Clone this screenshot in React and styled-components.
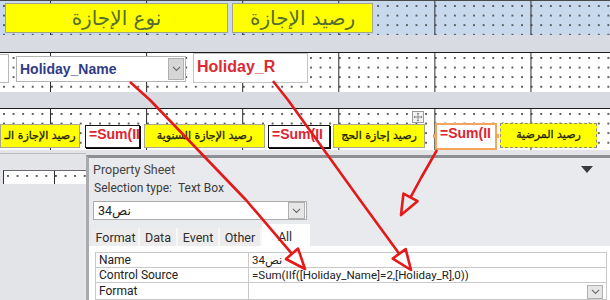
import React from "react";
import styled, { createGlobalStyle, css } from "styled-components";

const GlobalStyle = createGlobalStyle`
  html, body {
    margin: 0;
    padding: 0;
    background: #e3e4e8;
  }
  body {
    font-family: Roboto, "DejaVu Sans", sans-serif;
  }
`;

// design grid: dark column rules every 96px plus a dot pattern
const designGrid = (bg) => css`
  background-color: ${bg};
  background-image: linear-gradient(90deg, #2a2a2a 1px, transparent 1px),
    radial-gradient(circle at 1px 1px, #5c5c5c 0.8px, transparent 1.2px);
  background-size: 96.1px 100%, 9.6px 9.6px;
  background-position: 50px 0, 3px 4px;
`;

const Page = styled.div`
  position: relative;
  width: 610px;
  height: 300px;
  overflow: hidden;
  display: flex;
  flex-direction: column;
  background: #e3e4e8;
`;

const Section = styled.div`
  ${(p) => designGrid(p.$bg || "#ffffff")}
  flex: none;
  height: ${(p) => p.$h}px;
  box-sizing: border-box;
  border-top: 1px solid ${(p) => p.$line || "#1c1c1c"};
  display: flex;
  align-items: flex-start;
  padding: ${(p) => p.$pad || "0"};
`;

const Band = styled.div`
  flex: none;
  height: ${(p) => p.$h}px;
  background: #d9dbe2;
`;

const HeaderLabel = styled.div`
  flex: none;
  width: ${(p) => p.$w}px;
  height: 30px;
  margin-left: ${(p) => p.$ml || 0}px;
  box-sizing: border-box;
  background: #ffff00;
  border: 1px solid #a4a488;
  direction: rtl;
  display: flex;
  align-items: center;
  justify-content: center;
  white-space: nowrap;
  overflow: hidden;
  font-family: "DejaVu Sans", sans-serif;
  font-size: 20px;
  color: #536d33;
`;

const StubBox = styled.div`
  flex: none;
  width: 9px;
  height: 29px;
  margin-top: 1px;
  box-sizing: border-box;
  background: #fff;
  border: 1px solid #b8b8b8;
  border-left: none;
`;

const Combo = styled.div`
  flex: none;
  width: 170px;
  height: 26px;
  margin: 3px 0 0 7px;
  box-sizing: border-box;
  background: #fff;
  border: 1px solid #b3b3b3;
  display: flex;
  align-items: center;
  justify-content: space-between;
  padding: 0 1px 0 3px;
  font: bold 14px "Liberation Sans", Arial, sans-serif;
  color: #2f3b87;
`;

const DropBtn = styled.div`
  flex: none;
  width: ${(p) => p.$w || 16}px;
  height: ${(p) => p.$h || 22}px;
  box-sizing: border-box;
  background: ${(p) => p.$bg || "#d6d6d6"};
  border: 1px solid #b0b0b0;
  display: flex;
  align-items: center;
  justify-content: center;
`;

const RefBox = styled.div`
  flex: none;
  width: 115px;
  height: 30px;
  margin-left: 7px;
  box-sizing: border-box;
  background: #fff;
  border: 1px solid #c4c4c4;
  padding: 4px 0 0 3px;
  font: bold 16px "Liberation Sans", Arial, sans-serif;
  color: #dc2a35;
`;

const FieldLabel = styled.div`
  position: relative;
  flex: none;
  width: ${(p) => p.$w}px;
  height: ${(p) => p.$h || 24}px;
  margin-left: ${(p) => p.$ml || 0}px;
  margin-top: ${(p) => p.$mt || 0}px;
  box-sizing: border-box;
  background: #ffff00;
  border: 1px ${(p) => (p.$dashed ? "dashed #8a8a8a" : "solid #a8a890")};
  direction: rtl;
  text-align: center;
  white-space: nowrap;
  padding: 0 1px;
  line-height: 21px;
  font-family: "DejaVu Sans", sans-serif;
  font-size: 11px;
  color: #1e1e10;
  -webkit-text-stroke: 0.3px #1e1e10;
`;

const LabelText = styled.div`
  overflow: hidden;
`;

const SumBox = styled.div`
  position: relative;
  flex: none;
  width: ${(p) => p.$w}px;
  height: ${(p) => p.$h || 23}px;
  margin-left: ${(p) => p.$ml || 0}px;
  margin-top: ${(p) => p.$mt || 1}px;
  box-sizing: border-box;
  background: #fff;
  border: ${(p) => (p.$selected ? "2px solid #f5a45c" : "1px solid #161616")};
  box-shadow: ${(p) => (p.$selected ? "none" : "1px 1px 0 #000")};
  white-space: nowrap;
  padding-left: 3px;
  line-height: 21px;
  font: bold 14px "Liberation Sans", Arial, sans-serif;
  color: #df2530;
  ${(p) =>
    p.$selected &&
    css`
      &::before,
      &::after {
        content: "";
        position: absolute;
        top: 9px;
        width: 4px;
        height: 4px;
        background: #f5a45c;
      }
      &::before {
        left: -4px;
      }
      &::after {
        right: -4px;
      }
    `}
`;

const SumText = styled.div`
  overflow: hidden;
  width: 100%;
`;

const MoveHandle = styled.svg`
  position: absolute;
  right: 0;
  top: -14px;
`;

const Footer = styled.div`
  flex: 1;
  display: flex;
  min-height: 0;
`;

const FormStub = styled.div`
  flex: none;
  width: 86px;
  padding-top: 3px;
`;

const StubRule = styled.div`
  height: 1px;
  background: #b9bbc1;
`;

const StubStrip = styled.div`
  ${designGrid("#ffffff")}
  height: 13px;
  margin: 16px 0 0 3px;
  border-left: 1px solid #333;
  border-top: 1px solid #6a6a6a;
`;

const Panel = styled.div`
  flex: 1;
  margin-top: 5px;
  display: flex;
  flex-direction: column;
  background: #e9eaee;
  border-top: 3px solid #8e8f93;
  border-left: 3px solid #a9aaae;
  color: #333;
  font-family: Roboto, "DejaVu Sans", sans-serif;
`;

const PanelHeader = styled.div`
  height: 24px;
  display: flex;
  align-items: center;
  justify-content: space-between;
  padding: 2px 17px 0 4px;
  box-sizing: border-box;
  font-size: 12.5px;
  color: #444;
`;

const SelectionType = styled.div`
  height: 16px;
  padding-left: 5px;
  display: flex;
  gap: 6px;
  font-size: 12px;
  line-height: 16px;
  color: #3a3a3a;
`;

const ObjectCombo = styled.div`
  width: 214px;
  height: 21px;
  margin: 5px 0 0 4px;
  box-sizing: border-box;
  background: #fff;
  border: 1px solid #acacac;
  display: flex;
  align-items: center;
  justify-content: space-between;
  padding: 0 1px 0 4px;
  font-size: 12.5px;
  color: #222;
`;

const TabRow = styled.div`
  height: 22px;
  margin-top: 4px;
  padding-left: 4px;
  display: flex;
  align-items: flex-end;
`;

const Tab = styled.div`
  width: ${(p) => p.$w}px;
  height: ${(p) => (p.$active ? 22 : 18)}px;
  box-sizing: border-box;
  background: ${(p) => (p.$active ? "#ffffff" : "#ececec")};
  border-right: 2px solid ${(p) => (p.$active ? "#ffffff" : "#f7f7f7")};
  display: flex;
  align-items: ${(p) => (p.$active ? "flex-start" : "center")};
  justify-content: center;
  padding-top: ${(p) => (p.$active ? 5 : 0)}px;
  font-size: 12.5px;
  color: #2e2e2e;
`;

const TabBody = styled.div`
  flex: 1;
  background: #fff;
  padding: 6px 3px 0 6px;
`;

const PropTable = styled.table`
  width: 100%;
  border-collapse: collapse;
  font-size: 11.5px;
  color: #222;
`;

const KeyCell = styled.td`
  width: 146px;
  height: 14px;
  padding: 0 3px;
  border: 1px solid #c9c9c9;
  line-height: 14px;
  white-space: nowrap;
  font-size: 12px;
`;

const ValueCell = styled.td`
  height: 14px;
  padding: 0 3px;
  border: 1px solid #c9c9c9;
  line-height: 14px;
  white-space: nowrap;
  vertical-align: top;
`;

const ValueWrap = styled.div`
  display: flex;
  justify-content: flex-end;
  padding-top: 2px;
`;

const ArrowLayer = styled.svg`
  position: absolute;
  left: 0;
  top: 0;
  pointer-events: none;
`;

const Chevron = ({ size = 9, color = "#6a6a6a" }) => (
  <svg width={size} height={size * 0.6} viewBox="0 0 10 6">
    <polyline points="1,1 5,5 9,1" fill="none" stroke={color} strokeWidth="1.2" />
  </svg>
);

const Caret = () => (
  <svg width="12" height="7" viewBox="0 0 12 7">
    <polygon points="0,0 12,0 6,7" fill="#3b3b3b" />
  </svg>
);

const arrowHead = (from, tip, len = 20, half = 8) => {
  const dx = tip[0] - from[0];
  const dy = tip[1] - from[1];
  const d = Math.hypot(dx, dy);
  const ux = dx / d;
  const uy = dy / d;
  const bx = tip[0] - ux * len;
  const by = tip[1] - uy * len;
  return {
    base: [bx, by],
    points: `${tip[0]},${tip[1]} ${bx - uy * half},${by + ux * half} ${bx + uy * half},${by - ux * half}`,
  };
};

const arrows = [
  { path: [[130, 82], [150, 100], [246, 200]], tip: [305, 269] },
  { path: [[273, 81], [288, 100], [360, 200]], tip: [411, 270] },
  { path: [[437, 150], [421, 178]], tip: [401, 215] },
];

const Arrows = () => (
  <ArrowLayer width="610" height="300" viewBox="0 0 610 300">
    {arrows.map((a, i) => {
      const last = a.path[a.path.length - 1];
      const h = arrowHead(last, a.tip);
      const pts = [...a.path, h.base].map((p) => p.join(",")).join(" ");
      return (
        <g key={i} stroke="#e21a1a" strokeWidth="2.6" fill="none" strokeLinejoin="round">
          <polyline points={pts} />
          <polygon points={h.points} />
        </g>
      );
    })}
  </ArrowLayer>
);

const App = () => {
  return (
    <Page>
      <GlobalStyle />
      <Section $h={35} $bg="#c8d9ee" $line="#4a4a4a" $pad="2px 0 0 5px">
        <HeaderLabel $w={223}>نوع الإجازة</HeaderLabel>
        <HeaderLabel $w={141} $ml={4}>رصيد الإجازة</HeaderLabel>
      </Section>
      <Band $h={17} />
      <Section $h={40}>
        <StubBox />
        <Combo>
          Holiday_Name
          <DropBtn>
            <Chevron />
          </DropBtn>
        </Combo>
        <RefBox>Holiday_R</RefBox>
      </Section>
      <Band $h={16} />
      <Section $h={42} $pad="15px 0 0 0">
        <FieldLabel $w={80}>
          <LabelText>رصيد الإجازة الـ</LabelText>
        </FieldLabel>
        <SumBox $w={55} $ml={5}>
          <SumText>=Sum(II</SumText>
        </SumBox>
        <FieldLabel $w={121} $ml={4}>
          <LabelText>رصيد الإجازة السنوية</LabelText>
        </FieldLabel>
        <SumBox $w={62} $ml={3}>
          <SumText>=Sum(II</SumText>
        </SumBox>
        <FieldLabel $w={92} $ml={3}>
          <LabelText>رصيد إجازة الحج</LabelText>
          <MoveHandle width="12" height="12" viewBox="0 0 12 12">
            <rect x="0.5" y="0.5" width="11" height="11" fill="#f3f3f3" stroke="#9a9a9a" />
            <path d="M6 2v8M2 6h8" stroke="#8a8a8a" strokeWidth="1" />
            <path d="M6 1.5l-1.5 1.6h3zM6 10.5l-1.5-1.6h3zM1.5 6l1.6-1.5v3zM10.5 6l-1.6-1.5v3z" fill="#8a8a8a" />
          </MoveHandle>
        </FieldLabel>
        <SumBox $w={62} $h={27} $ml={10} $mt={-1} $selected>
          <SumText>=Sum(II</SumText>
        </SumBox>
        <FieldLabel $w={97} $ml={3} $mt={-1} $h={25} $dashed>
          <LabelText>رصيد المرضية</LabelText>
        </FieldLabel>
      </Section>
      <Footer>
        <FormStub>
          <StubRule />
          <StubStrip />
        </FormStub>
        <Panel>
          <PanelHeader>
            Property Sheet
            <Caret />
          </PanelHeader>
          <SelectionType>
            <span>Selection type:</span>
            <span>Text Box</span>
          </SelectionType>
          <ObjectCombo>
            <span>نص34</span>
            <DropBtn $w={17} $h={17} $bg="#e6e6e6">
              <Chevron />
            </DropBtn>
          </ObjectCombo>
          <TabRow>
            <Tab $w={47}>Format</Tab>
            <Tab $w={38}>Data</Tab>
            <Tab $w={42}>Event</Tab>
            <Tab $w={42}>Other</Tab>
            <Tab $w={48} $active>All</Tab>
          </TabRow>
          <TabBody>
            <PropTable>
              <tbody>
                <tr>
                  <KeyCell>Name</KeyCell>
                  <ValueCell>نص34</ValueCell>
                </tr>
                <tr>
                  <KeyCell>Control Source</KeyCell>
                  <ValueCell>=Sum(IIf([Holiday_Name]=2,[Holiday_R],0))</ValueCell>
                </tr>
                <tr>
                  <KeyCell>Format</KeyCell>
                  <ValueCell>
                    <ValueWrap>
                      <DropBtn $w={16} $h={14} $bg="#e6e6e6">
                        <Chevron />
                      </DropBtn>
                    </ValueWrap>
                  </ValueCell>
                </tr>
              </tbody>
            </PropTable>
          </TabBody>
        </Panel>
      </Footer>
      <Arrows />
    </Page>
  );
};

export default App;
